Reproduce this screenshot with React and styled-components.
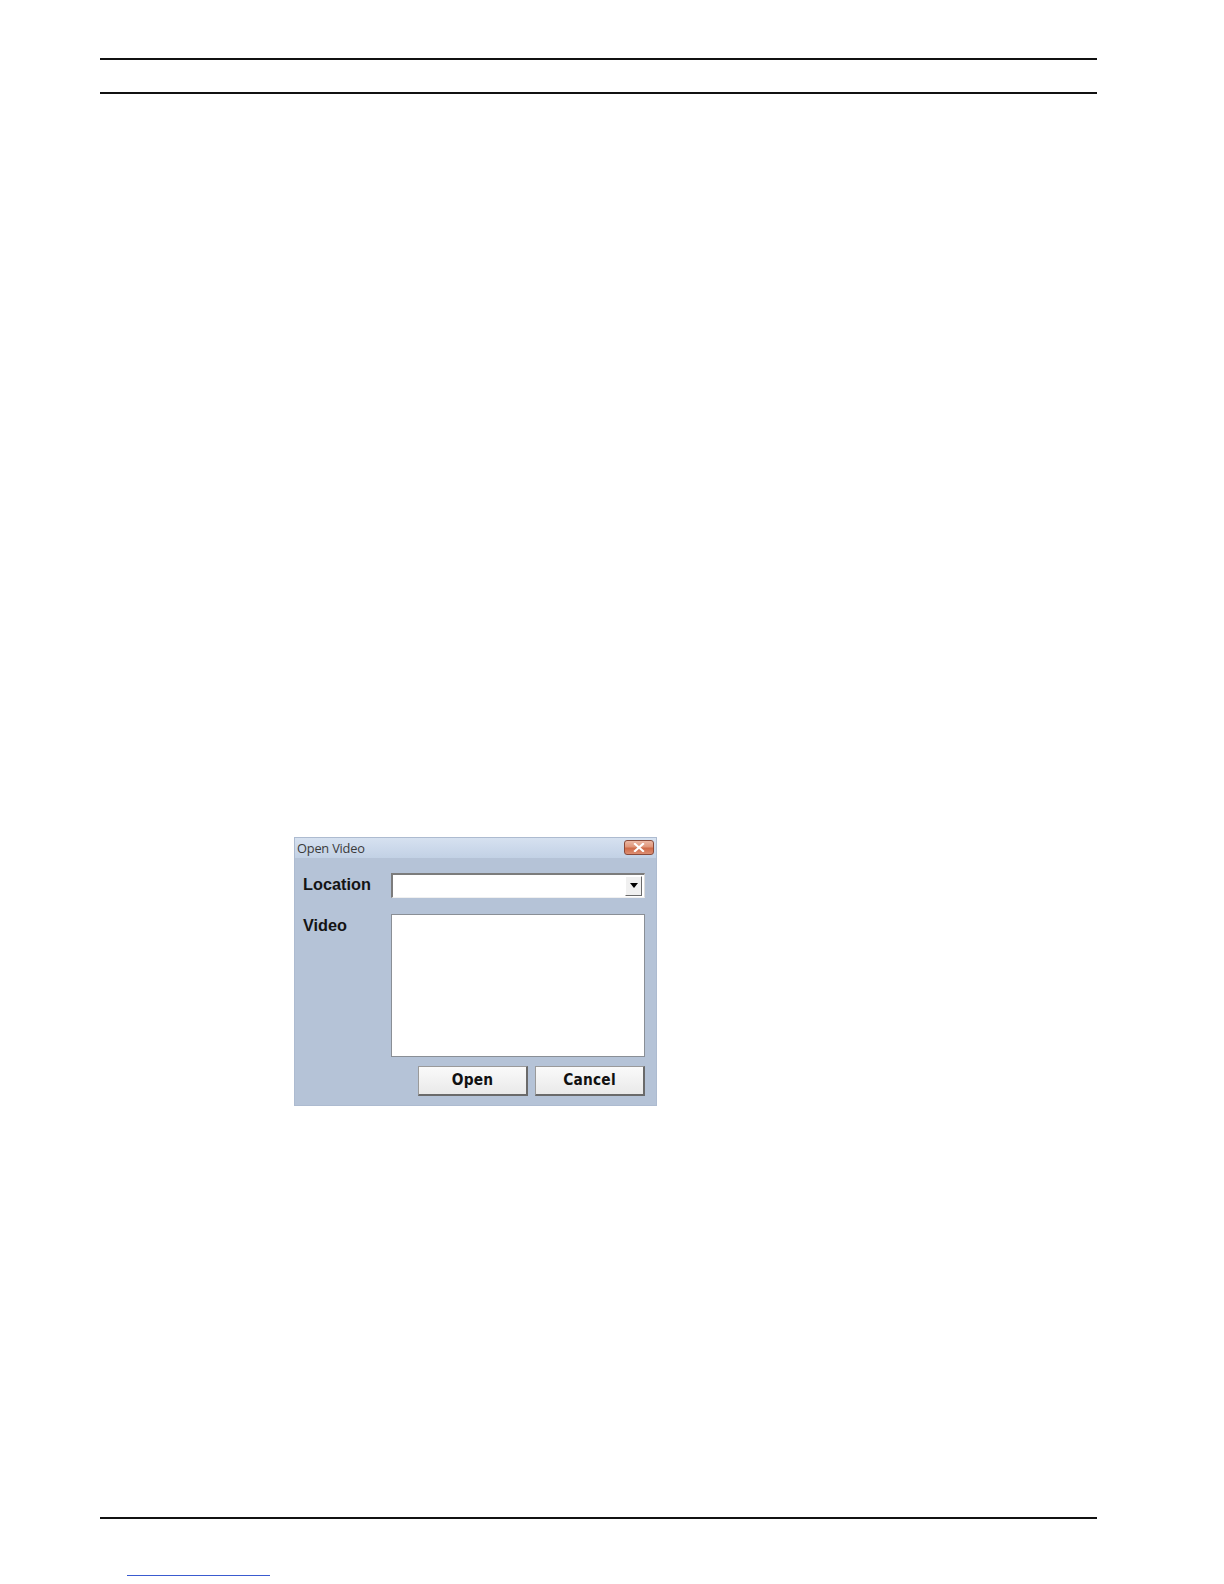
import React from "react";
import styled, { createGlobalStyle } from "styled-components";

const Global = createGlobalStyle`
  html, body { margin: 0; padding: 0; background: #fff; overflow: hidden; }
  body { font-family: "Liberation Sans", Arial, sans-serif; }
`;

const Page = styled.div`
  width: 1224px;
  height: 1584px;
  overflow: hidden;
  position: relative;
  display: flex;
  flex-direction: column;
`;

const Rule = styled.div`
  margin-left: 100px;
  width: 997px;
  height: 2px;
  flex: none;
  background: #111;
  margin-top: ${(p) => p.$top}px;
`;

const DialogWrap = styled.div`
  margin-top: 743px;
  margin-left: 294px;
  flex: none;
`;

const Dialog = styled.div`
  width: 363px;
  height: 269px;
  background: #b5c3d7;
  display: flex;
  flex-direction: column;
  box-sizing: border-box;
  border: 1px solid #adbbd0;
`;

const TitleBar = styled.div`
  height: 20px;
  background: linear-gradient(#d6e1f0, #c2d1e5);
  display: flex;
  align-items: center;
  justify-content: space-between;
  padding: 0 2px 0 2px;
`;

const Title = styled.span`
  font-family: "Open Sans", "DejaVu Sans", sans-serif;
  font-size: 12.8px;
  color: #3a3a3a;
  letter-spacing: -0.2px;
`;

const CloseBtn = styled.div`
  width: 30px;
  height: 15px;
  border-radius: 3px;
  border: 1px solid #8a4a3a;
  background: linear-gradient(#ecb8a4 0%, #e0967a 45%, #cf6a48 55%, #dc8e72 100%);
  display: flex;
  align-items: center;
  justify-content: center;
  box-sizing: border-box;
`;

const Body = styled.div`
  flex: 1;
  display: grid;
  grid-template-columns: 88px 254px;
  grid-template-rows: 25px 143px 30px;
  row-gap: 16px;
  padding: 15px 0 0 8px;
  box-sizing: border-box;
`;

const Label = styled.div`
  font-family: "Liberation Sans", Arial, sans-serif;
  font-weight: bold;
  font-size: 16.3px;
  color: #141414;
  line-height: 23px;
`;

const Combo = styled.div`
  background: #fff;
  border-top: 2px solid #7c7c7c;
  border-left: 2px solid #7c7c7c;
  border-right: 1px solid #dcdcdc;
  border-bottom: 1px solid #f0f0f0;
  box-sizing: border-box;
  display: flex;
  justify-content: flex-end;
  padding: 1px 2px 1px 1px;
`;

const DropBtn = styled.div`
  width: 17px;
  height: 100%;
  background: #f0f0f0;
  border-right: 1px solid #6a6a6a;
  border-bottom: 1px solid #6a6a6a;
  border-top: 1px solid #fff;
  border-left: 1px solid #fff;
  box-sizing: border-box;
  display: flex;
  align-items: center;
  justify-content: center;
`;

const List = styled.div`
  background: #fff;
  border: 1px solid #8a8f96;
  box-sizing: border-box;
`;

const Buttons = styled.div`
  grid-column: 2;
  display: flex;
  justify-content: flex-end;
  gap: 7px;
  margin-top: -7px;
`;

const Button = styled.div`
  width: 110px;
  height: 30px;
  box-sizing: border-box;
  background: linear-gradient(#fafafa, #e9e9e9);
  border-top: 1px solid #9a9a9a;
  border-left: 1px solid #9a9a9a;
  border-right: 2px solid #6a6a6a;
  border-bottom: 2px solid #6a6a6a;
  display: flex;
  align-items: center;
  justify-content: center;
  font-family: "DejaVu Sans Condensed", "DejaVu Sans", sans-serif;
  font-stretch: condensed;
  font-weight: bold;
  font-size: 15.3px;
  color: #111;
  letter-spacing: 0.2px;
`;

const LinkLine = styled.div`
  position: absolute;
  left: 127px;
  top: 1575px;
  width: 143px;
  height: 1px;
  background: #3a5bd0;
`;

export default function App() {
  return (
    <Page>
      <Global />
      <Rule $top={57.5} />
      <Rule $top={32} />
      <DialogWrap>
        <Dialog>
          <TitleBar>
            <Title>Open Video</Title>
            <CloseBtn>
              <svg width="12" height="9" viewBox="0 0 12 9">
                <path d="M2 1 L10 8 M10 1 L2 8" stroke="#fff" strokeWidth="2.2" strokeLinecap="square" />
              </svg>
            </CloseBtn>
          </TitleBar>
          <Body>
            <Label>Location</Label>
            <Combo>
              <DropBtn>
                <svg width="8" height="5" viewBox="0 0 8 5">
                  <path d="M0 0 H8 L4 5 Z" fill="#000" />
                </svg>
              </DropBtn>
            </Combo>
            <Label>Video</Label>
            <List />
            <Buttons>
              <Button>Open</Button>
              <Button>Cancel</Button>
            </Buttons>
          </Body>
        </Dialog>
      </DialogWrap>
      <Rule $top={411.5} />
      <LinkLine />
    </Page>
  );
}
